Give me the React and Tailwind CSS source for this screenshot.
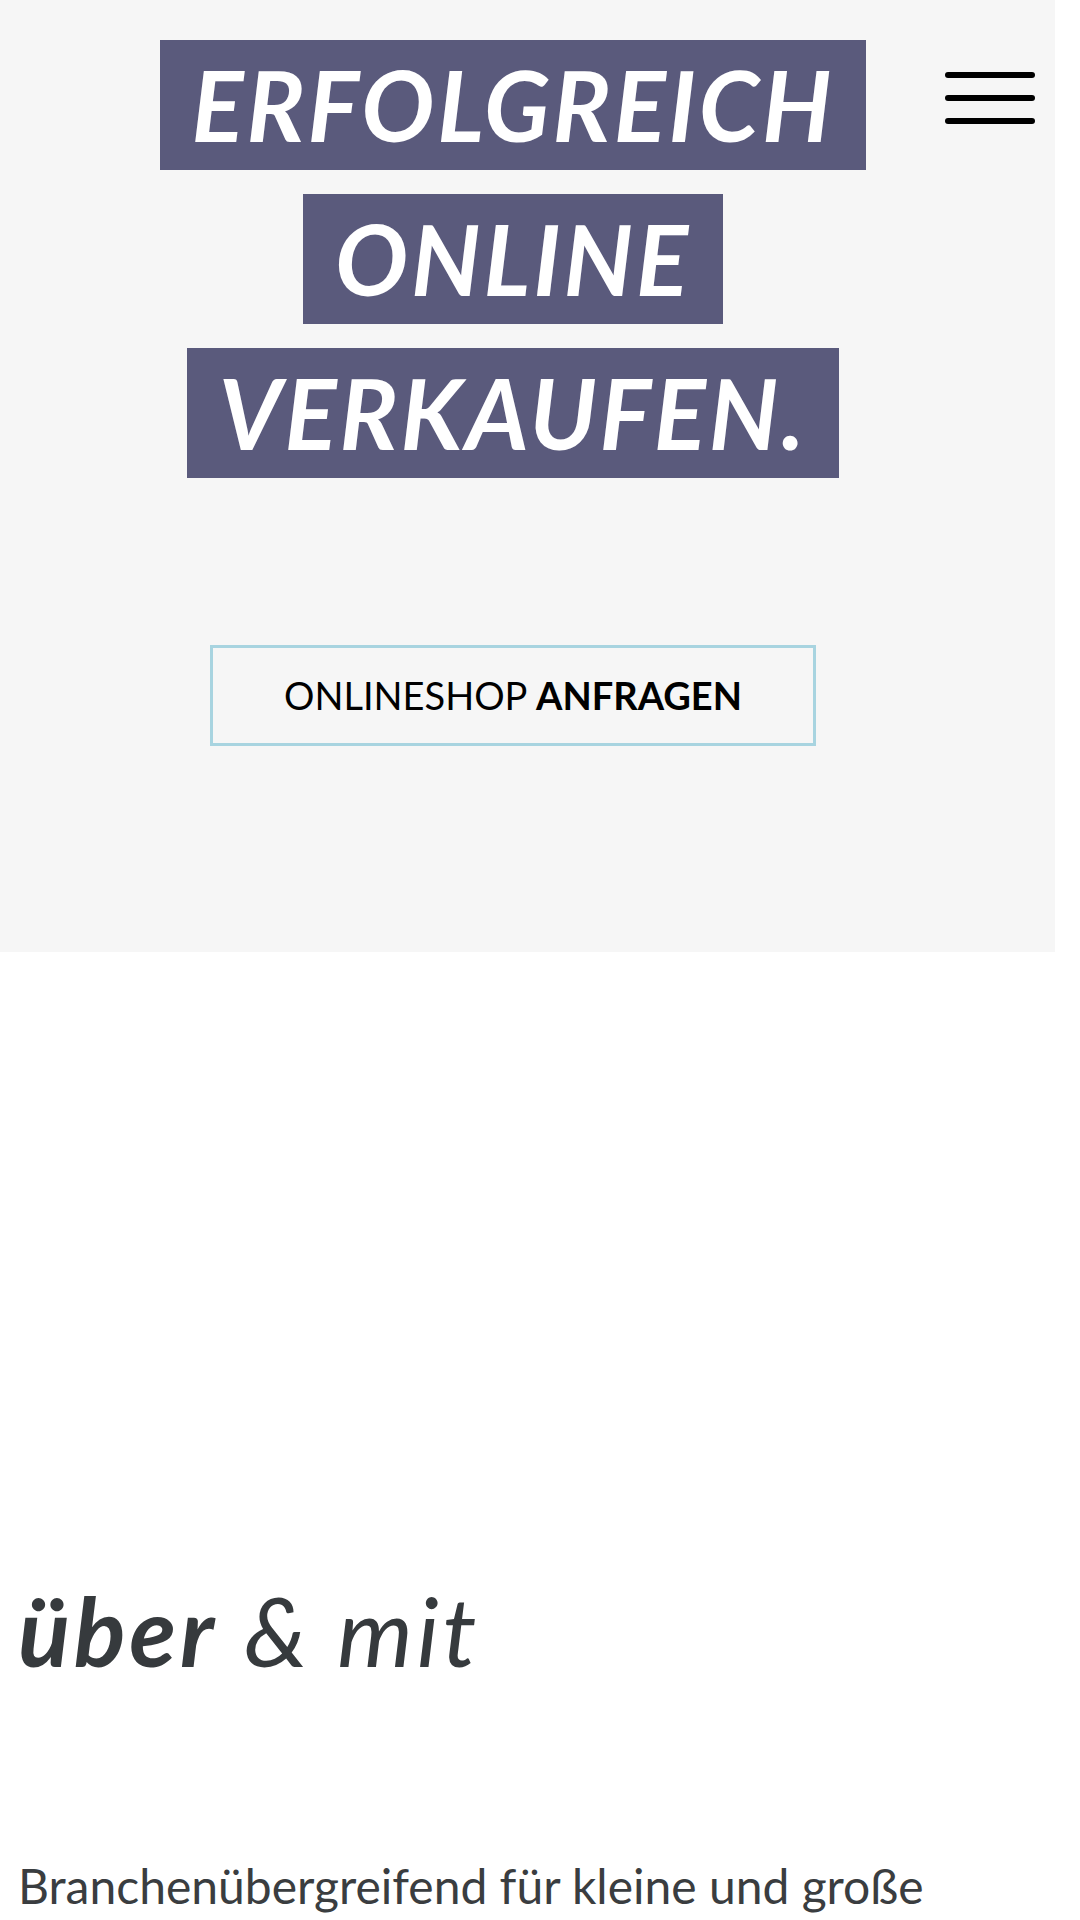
import React from "react";

const TITLE_LINES = ["ERFOLGREICH", "ONLINE", "VERKAUFEN."];

function MenuButton() {
  return (
    <button className="absolute left-[945px] top-[72px] flex w-[90px] flex-col gap-[17px]" aria-label="Menü">
      <span className="block h-[6px] w-full rounded-full bg-black" />
      <span className="block h-[6px] w-full rounded-full bg-black" />
      <span className="block h-[6px] w-full rounded-full bg-black" />
    </button>
  );
}

function Hero() {
  return (
    <section className="relative h-[952px] w-[1055px] bg-[#f6f6f6] pt-[40px]">
      <MenuButton />
      <div className="flex w-[1026px] flex-col items-center">
        {/* Headline */}
        <h1 className="flex flex-col items-center gap-[24px]">
          {TITLE_LINES.map((line) => (
            <span
              key={line}
              className="block h-[130px] bg-[#5a5a7c] px-[32px] text-[97px] font-bold italic leading-[130px] tracking-[0.03em] text-white"
            >
              {line}
            </span>
          ))}
        </h1>

        {/* CTA */}
        <a
          href="#"
          className="mt-[167px] flex h-[101px] w-[606px] items-center justify-center border-[3px] border-[#a8d4e0] text-[38px] text-black"
        >
          ONLINESHOP&nbsp;<span className="font-bold">ANFRAGEN</span>
        </a>
      </div>
    </section>
  );
}

export default function App() {
  return (
    <div className="min-h-[1920px] w-[1080px] overflow-hidden bg-white font-['Lato',sans-serif]">
      <Hero />
      <section className="px-[18px] pt-[620px] text-[#363a3d]">
        <h2 className="text-[96px] italic leading-[1.2] tracking-[0.04em]">
          <span className="font-bold">über</span> &amp; mit
        </h2>
        <p className="mt-[170px] text-[48px] leading-[1.2] text-[#3a3d40]">
          Branchenübergreifend für kleine und große
        </p>
      </section>
    </div>
  );
}
